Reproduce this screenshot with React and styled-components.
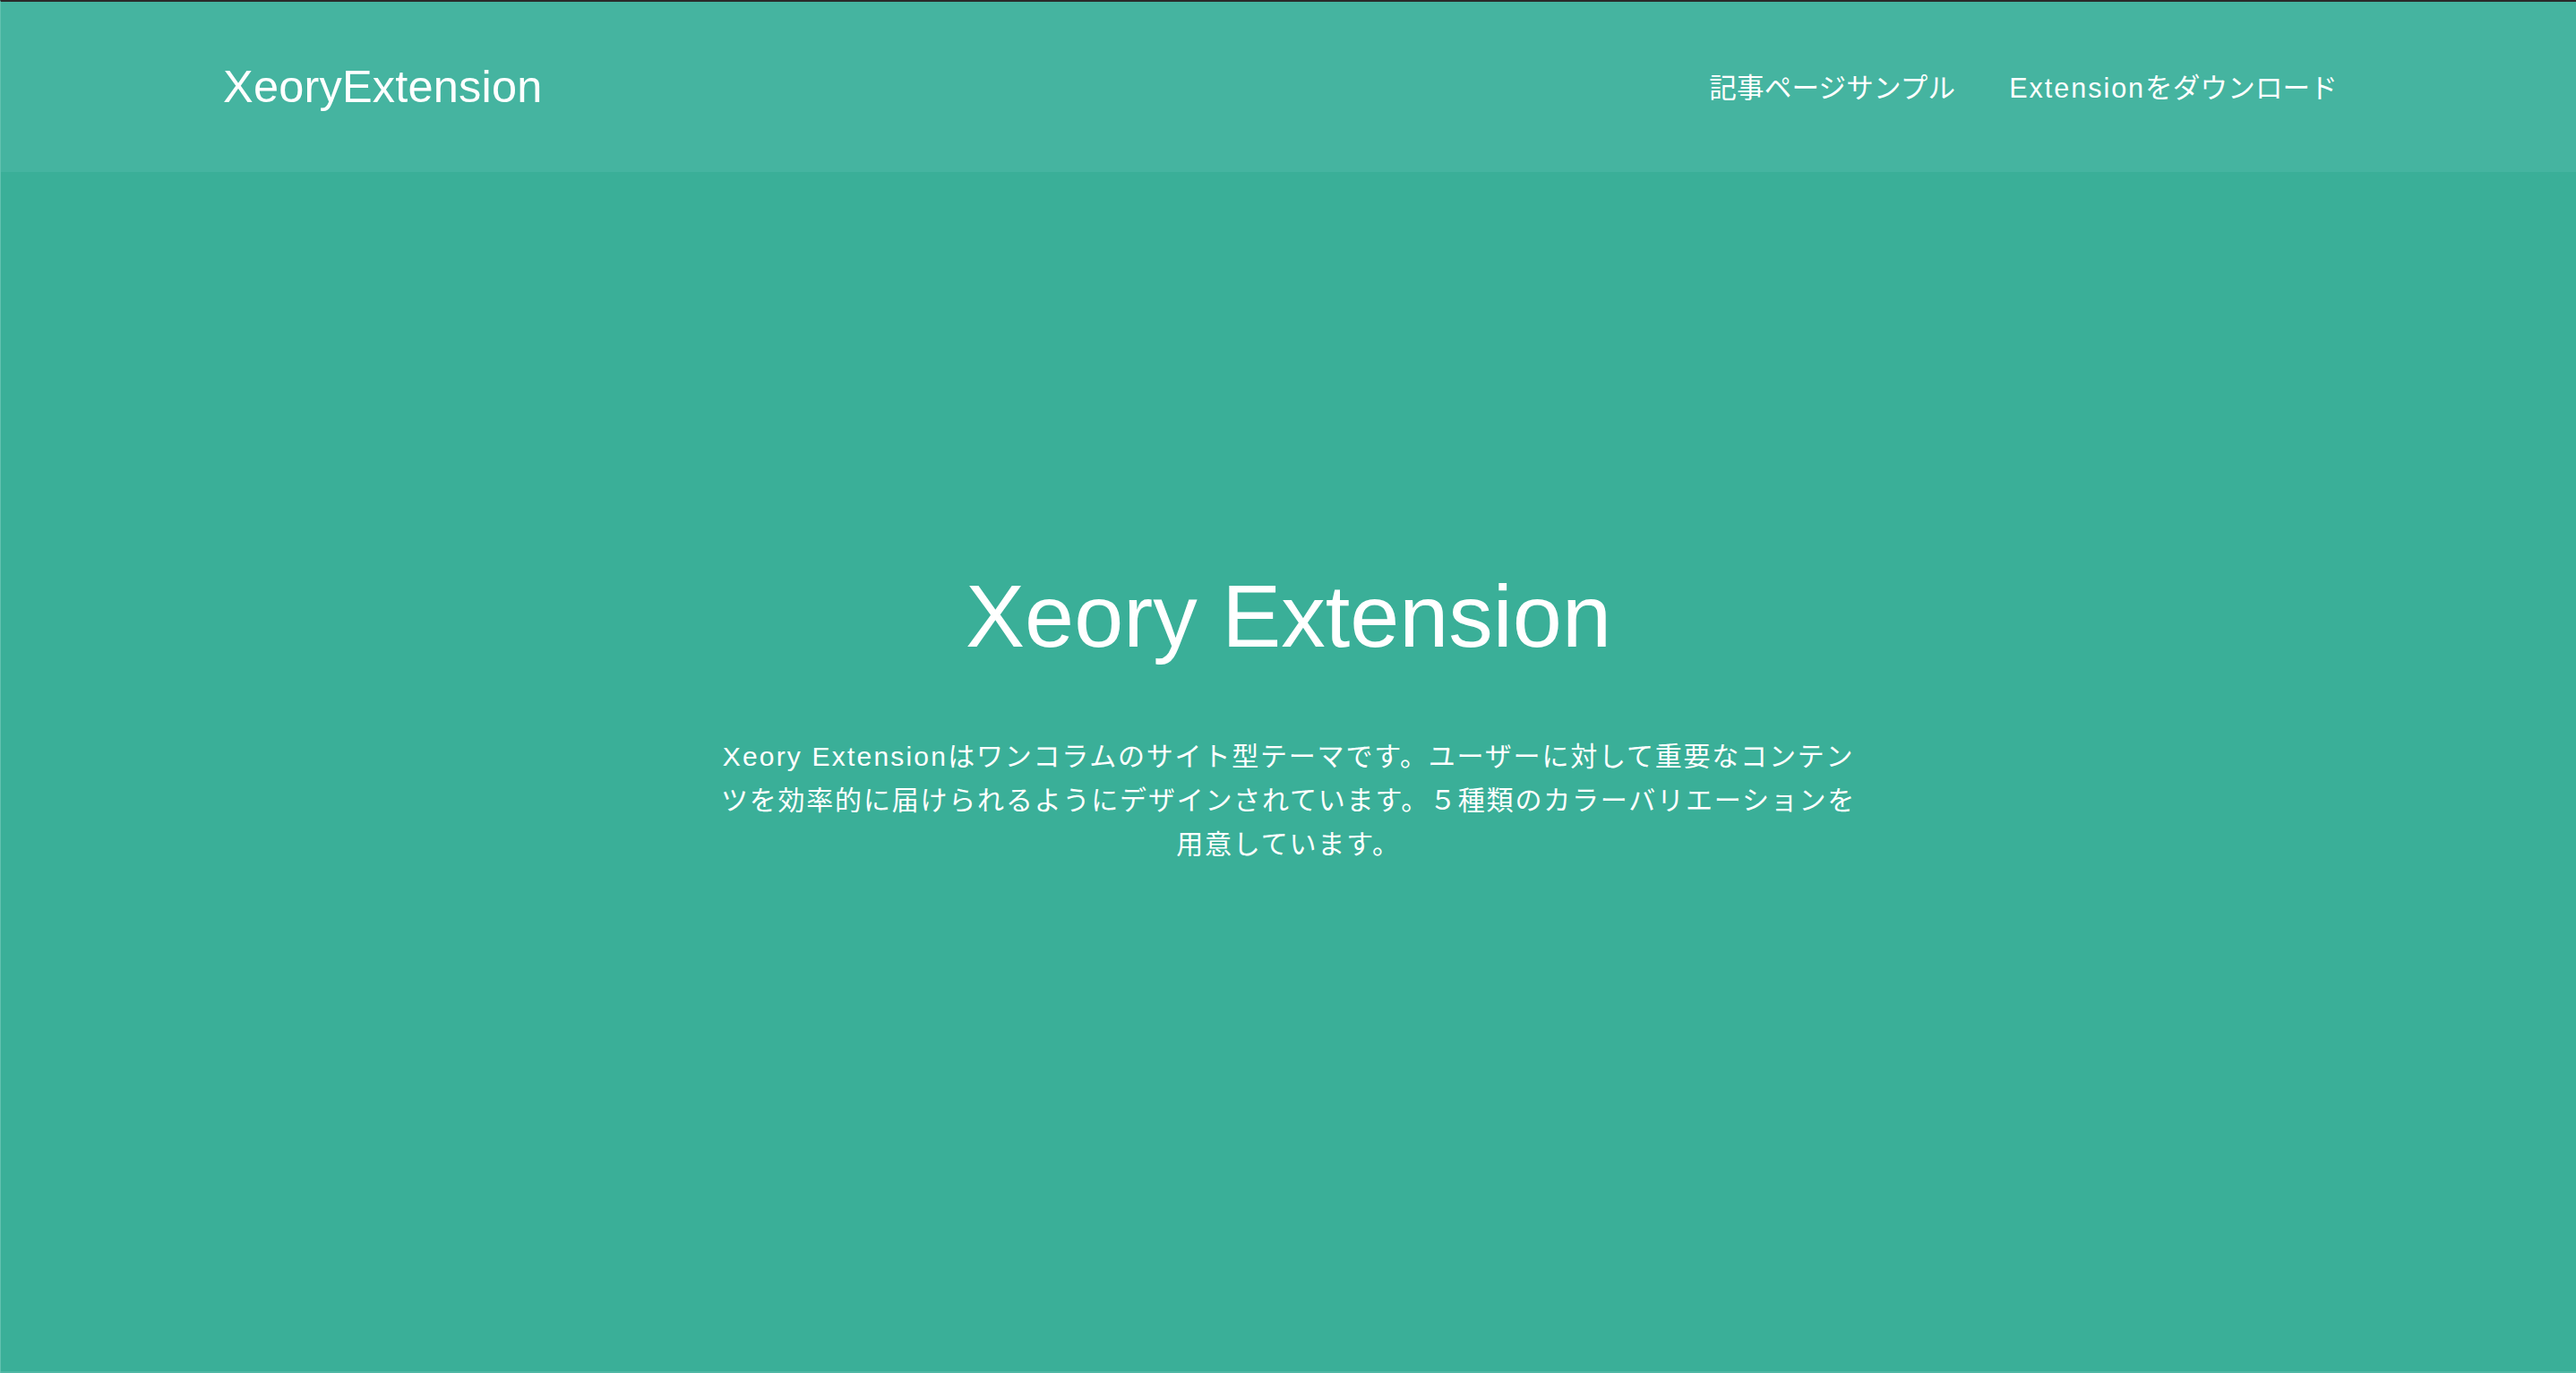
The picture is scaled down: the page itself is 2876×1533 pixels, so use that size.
import React from "react";
import styled, { createGlobalStyle } from "styled-components";

const Global = createGlobalStyle`
  html, body { margin: 0; padding: 0; }
  body {
    background: #3aaf98;
    font-family: "Liberation Sans", "Noto Sans CJK JP", sans-serif;
    color: #fff;
  }
`;

const Page = styled.div`
  min-height: 1533px;
  box-sizing: border-box;
  display: flex;
  flex-direction: column;
  background: #3aaf98;
  border-top: 2px solid #2a2a2a;
  border-left: 1px solid #62c1af;
`;

const Header = styled.header`
  height: 190px;
  flex: none;
  background: #45b4a0;
  display: flex;
  align-items: center;
  padding: 0 266px 0 248px;
`;

const Logo = styled.a`
  font-family: "Liberation Sans", sans-serif;
  font-size: 50.5px;
  color: #fff;
  text-decoration: none;
  letter-spacing: 0.2px;
  margin-bottom: 2px;
`;

const Nav = styled.nav`
  margin-left: auto;
  display: flex;
  gap: 60px;
  margin-bottom: 2px;
`;

const NavLink = styled.a`
  font-family: "Liberation Sans", "Noto Sans CJK JP", sans-serif;
  font-size: 30.5px;
  color: #fff;
  text-decoration: none;
  letter-spacing: 0.2px;
`;

const NavLatin = styled.span`
  letter-spacing: 2px;
`;

const Hero = styled.main`
  flex: 1;
  display: flex;
  flex-direction: column;
  align-items: center;
  padding-top: 438px;
  border-bottom: 2px solid #4fb8a4;
`;

const Title = styled.h1`
  margin: 0;
  font-family: "Liberation Sans", sans-serif;
  font-weight: 400;
  font-size: 99px;
  line-height: 116px;
  color: #fff;
`;

const Lead = styled.p`
  margin: 74px 0 0;
  max-width: 1285px;
  text-align: center;
  font-size: 30px;
  line-height: 49px;
  letter-spacing: 1.8px;
  color: #fff;
`;

const Brand = styled.span`
  font-family: "Liberation Sans", sans-serif;
  letter-spacing: 2.2px;
`;

export default function App() {
  return (
    <>
      <Global />
      <Page>
        <Header>
          <Logo href="#">XeoryExtension</Logo>
          <Nav>
            <NavLink href="#">記事ページサンプル</NavLink>
            <NavLink href="#">
              <NavLatin>Extension</NavLatin>をダウンロード
            </NavLink>
          </Nav>
        </Header>
        <Hero>
          <Title>Xeory Extension</Title>
          <Lead>
            <Brand>Xeory Extension</Brand>
            はワンコラムのサイト型テーマです。ユーザーに対して重要なコンテンツを効率的に届けられるようにデザインされています。５種類のカラーバリエーションを用意しています。
          </Lead>
        </Hero>
      </Page>
    </>
  );
}
